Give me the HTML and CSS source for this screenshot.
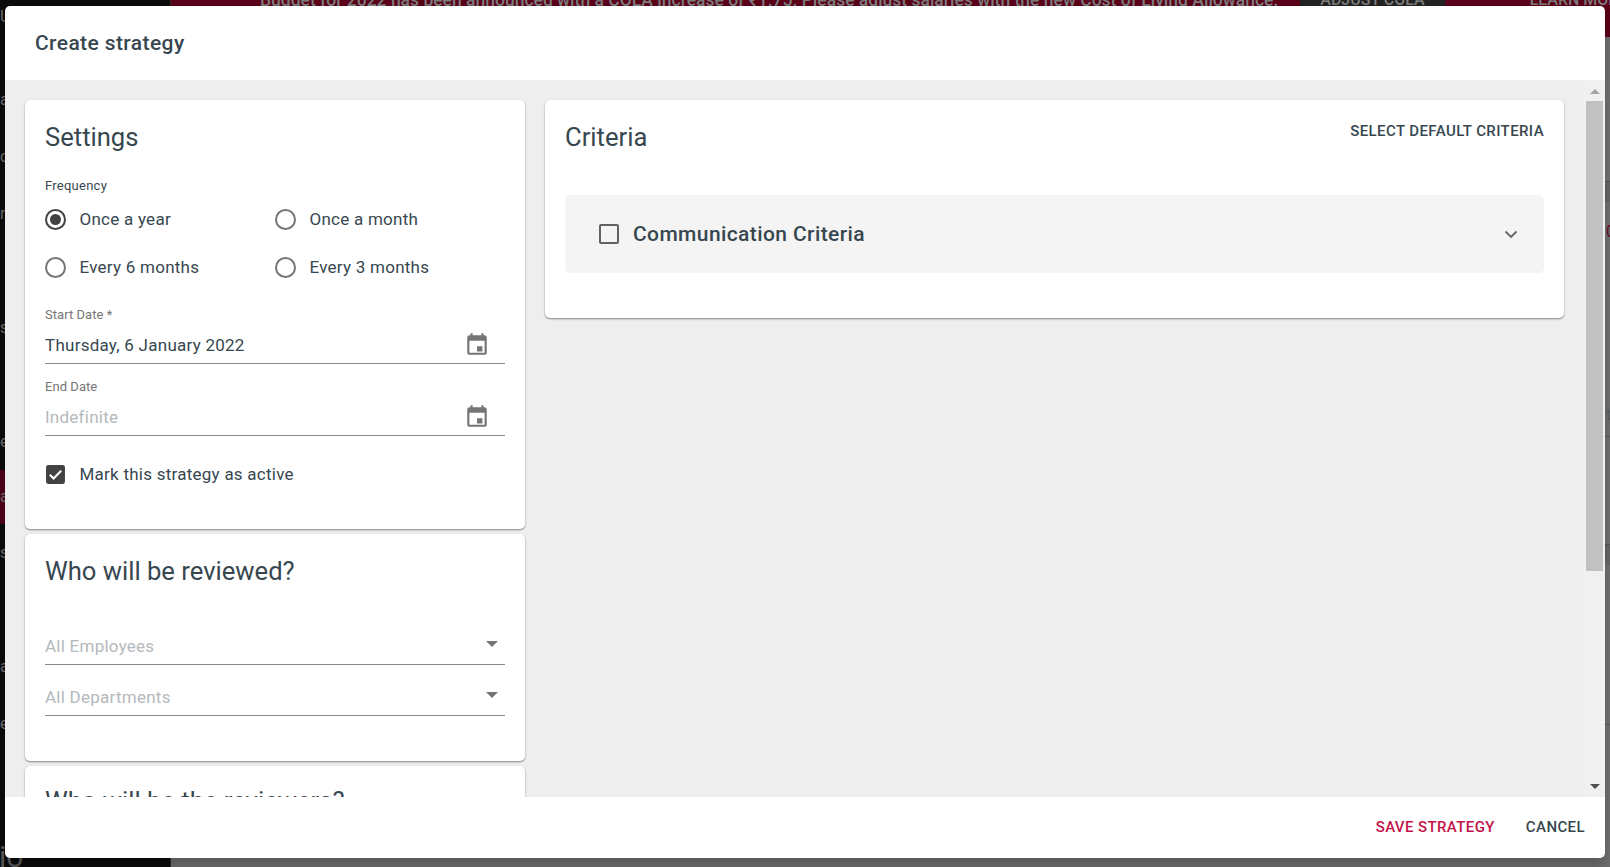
FILE: index.html
```html
<!DOCTYPE html>
<html lang="en">
<head>
<meta charset="utf-8">
<title>Create strategy</title>
<link rel="stylesheet" href="styles.css">
</head>
<body>
<div class="app">
  <nav class="side">
    <ul class="side-list">
      <li class="side-item side-first">U</li>
      <li class="side-item">a</li>
      <li class="side-item">c</li>
      <li class="side-item">r</li>
      <li class="side-item"></li>
      <li class="side-item">st</li>
      <li class="side-item"></li>
      <li class="side-item">e</li>
      <li class="side-item side-active">a</li>
      <li class="side-item">s</li>
      <li class="side-item"></li>
      <li class="side-item">a</li>
      <li class="side-item">e</li>
    </ul>
    <div class="side-logo">io</div>
  </nav>
  <main class="page">
    <div class="banner">
      <span class="banner-text">Budget for 2022 has been announced with a COLA increase of ₹1.75. Please adjust salaries with the new Cost of Living Allowance.</span>
      <span class="banner-btn">ADJUST COLA</span>
      <span class="banner-link">LEARN MORE</span>
    </div>
    <div class="bg-rows">
      <div class="bg-row bg-r1"></div>
      <div class="bg-row bg-band"></div>
      <div class="bg-row bg-r3">0</div>
      <div class="bg-row bg-r4">t<br>p</div>
      <div class="bg-row bg-r5"></div>
      <div class="bg-row bg-band"></div>
      <div class="bg-row bg-r7"></div>
    </div>
  </main>
</div>

<div class="dialog">
  <header class="dialog-head">Create strategy</header>
  <div class="dialog-body">
    <div class="scroll-content">
      <div class="col-left">
        <section class="card card-settings">
          <h2 class="card-title">Settings</h2>
          <div class="small-label freq-label">Frequency</div>
          <div class="radio-grid">
            <label class="radio-row"><span class="radio radio-on"></span>Once a year</label>
            <label class="radio-row"><span class="radio"></span>Once a month</label>
            <label class="radio-row"><span class="radio"></span>Every 6 months</label>
            <label class="radio-row"><span class="radio"></span>Every 3 months</label>
          </div>
          <div class="field field-start">
            <div class="small-label muted">Start Date *</div>
            <div class="input-line">
              <span class="value">Thursday, 6 January 2022</span>
              <svg class="cal" viewBox="0 0 24 24"><path d="M19 4h-1V2h-2v2H8V2H6v2H5c-1.1 0-2 .9-2 2v14c0 1.1.9 2 2 2h14c1.1 0 2-.9 2-2V6c0-1.100-.9-2-2-2zm0 16H5V9h14v11zM12 14h5v5h-5z" fill-rule="evenodd"/></svg>
            </div>
          </div>
          <div class="field field-end">
            <div class="small-label muted">End Date</div>
            <div class="input-line">
              <span class="placeholder">Indefinite</span>
              <svg class="cal" viewBox="0 0 24 24"><path d="M19 4h-1V2h-2v2H8V2H6v2H5c-1.1 0-2 .9-2 2v14c0 1.1.9 2 2 2h14c1.1 0 2-.9 2-2V6c0-1.100-.9-2-2-2zm0 16H5V9h14v11zM12 14h5v5h-5z" fill-rule="evenodd"/></svg>
            </div>
          </div>
          <label class="check-row">
            <svg class="check" viewBox="0 0 20 20"><rect x="1" y="1" width="18" height="18" rx="2" fill="#424242"/><path d="M4.600 10.200l3.600 3.600 7.200-7.400" fill="none" stroke="#fff" stroke-width="2"/></svg>
            Mark this strategy as active
          </label>
        </section>
        <section class="card card-who">
          <h2 class="card-title">Who will be reviewed?</h2>
          <div class="select-line select-first"><span class="placeholder">All Employees</span><span class="caret"></span></div>
          <div class="select-line select-second"><span class="placeholder">All Departments</span><span class="caret"></span></div>
        </section>
        <section class="card card-when">
          <h2 class="card-title">Who will be the reviewers?</h2>
        </section>
      </div>
      <section class="card card-criteria">
        <div class="criteria-head">
          <h2 class="card-title">Criteria</h2>
          <span class="text-btn">SELECT DEFAULT CRITERIA</span>
        </div>
        <div class="panel">
          <span class="box"></span>
          <span class="panel-title">Communication Criteria</span>
          <svg class="chev" viewBox="0 0 14 9"><path d="M1.500 1.500L7 7l5.500-5.500" fill="none" stroke="#666" stroke-width="1.900"/></svg>
        </div>
      </section>
    </div>
    <div class="scrollbar">
      <span class="arrow-up"></span>
      <span class="thumb"></span>
      <span class="arrow-down"></span>
    </div>
  </div>
  <footer class="dialog-foot">
    <span class="foot-btn foot-save">SAVE STRATEGY</span>
    <span class="foot-btn">CANCEL</span>
  </footer>
</div>
</body>
</html>
```

FILE: styles.css
```css
* { box-sizing: border-box; }
html, body { margin: 0; height: 100%; overflow: hidden; }
body { font-family: Roboto, "Liberation Sans", sans-serif; color: #37474f; background: #6e6e6e; }

.app { display: flex; height: 867px; }
.side { width: 171px; background: #0b0b0b; color: #6d6d6d; overflow: hidden; border-right: 1px solid #2a2a2a; flex: none; position: relative; }
.side-list { list-style: none; margin: 0; padding: 0; }
.side-item { height: 57px; font-size: 16px; line-height: 57px; }
.side-first { height: 71px; line-height: 34px; }
.side-active { height: 54px; line-height: 54px; background: #4e0018; }
.side-logo { position: absolute; left: -1px; bottom: -8px; font-size: 30px; line-height: 36px; color: #5a5a5a; }

.page { flex: 1; display: flex; flex-direction: column; min-width: 0; }
.banner { height: 37px; flex: none; background: #5a0018; color: #7b7b7b; font-size: 17.500px; font-weight: 500; display: flex; align-items: flex-start; overflow: hidden; line-height: 12px; padding-left: 89px; }
.banner-text { white-space: nowrap; position: relative; top: -6px; }
.banner-btn { background: #222; padding: 0 20px; margin-left: 22px; height: 37px; font-size: 16px; white-space: nowrap; flex: none; }
.banner-btn, .banner-link { line-height: 0; }
.banner-link { margin-left: 85px; white-space: nowrap; font-size: 16px; }

.bg-rows { flex: 1; display: flex; flex-direction: column; padding-left: 0; background: #6e6e6e; color: #5d5d5d; font-size: 16px; }
.bg-row { flex: none; padding-left: 1435px; border-bottom: 1px solid #555; overflow: hidden; }
.bg-r1 { height: 145px; }
.bg-band { height: 20px; background: #646464; border-bottom: 0; }
.bg-r3 { height: 60px; line-height: 60px; color: #6a0a2a; border-bottom: 0; }
.bg-r4 { height: 175px; padding-top: 132px; line-height: 42px; }
.bg-r5 { height: 108px; }
.bg-r7 { height: 160px; }

.dialog { position: absolute; left: 5px; top: 6px; width: 1600px; height: 852px; background: #fff; border-radius: 5px; overflow: hidden; display: flex; flex-direction: column; box-shadow: 0 10px 12px rgba(0,0,0,.18); }
.dialog-head { height: 74px; flex: none; padding-left: 30px; font-size: 21px; font-weight: 500; letter-spacing: .4px; line-height: 74px; color: #37474f; }
.dialog-body { height: 717px; flex: none; display: flex; background: #eee; overflow: hidden; }
.dialog-foot { flex: 1; display: flex; justify-content: flex-end; align-items: center; gap: 31px; padding: 0 20px 2px 0; }

.scroll-content { flex: 1; min-width: 0; display: flex; align-items: flex-start; gap: 20px; padding: 20px; }
.col-left { width: 500px; flex: none; display: flex; flex-direction: column; gap: 5px; }
.card { background: #fff; border-radius: 5px; padding: 20px; box-shadow: 0 1px 2px rgba(0,0,0,.45); }
.card-title { margin: 0; font-size: 25.600px; font-weight: 400; line-height: 34px; color: #37474f; }

.small-label { font-size: 13px; line-height: 14px; letter-spacing: .05px; color: #37474f; }
.muted { color: #757575; }
.freq-label { margin-top: 25px; letter-spacing: .25px; }
.radio-grid { display: grid; grid-template-columns: 230px 1fr; row-gap: 8px; margin-top: 6px; }
.radio-row { display: flex; align-items: center; height: 40px; font-size: 17px; letter-spacing: .25px; gap: 13.500px; color: #37474f; }
.radio { width: 21px; height: 21px; border-radius: 50%; border: 2px solid #757575; flex: none; position: relative; }
.radio-on { border-color: #424242; }
.radio-on::after { content: ""; position: absolute; left: 3px; top: 3px; width: 11px; height: 11px; border-radius: 50%; background: #424242; }

.field { display: block; }
.field-start { margin-top: 21px; }
.field-end { margin-top: 16px; }
.input-line { display: flex; align-items: center; justify-content: space-between; height: 38px; margin-top: 4px; border-bottom: 1.500px solid #8a8a8a; font-size: 17px; letter-spacing: .25px; padding-right: 15px; padding-top: 1px; }
.value { color: #37474f; }
.placeholder { color: #b4b9bc; font-size: 17px; letter-spacing: .25px; }
.cal { width: 26px; height: 26px; fill: #757575; margin-bottom: 2px; }

.check-row { display: flex; align-items: center; gap: 13.500px; height: 40px; margin-top: 18px; font-size: 17px; letter-spacing: .25px; color: #37474f; }
.check { width: 21px; height: 21px; flex: none; }
.card-settings { height: 429px; }
.card-who { height: 227px; }
.card-when { height: 120px; padding-top: 18px; }

.select-line { display: flex; align-items: center; justify-content: space-between; border-bottom: 1.500px solid #8a8a8a; height: 36px; padding: 0 7px 2px 0; }
.select-first { margin-top: 41px; }
.select-second { margin-top: 15px; }
.caret { width: 0; height: 0; border-left: 6px solid transparent; border-right: 6px solid transparent; border-top: 6px solid #757575; margin-bottom: 4px; }

.card-criteria { flex: 1; min-width: 0; height: 218px; }
.criteria-head { display: flex; justify-content: space-between; align-items: flex-start; }
.text-btn { font-size: 15px; font-weight: 500; letter-spacing: .4px; line-height: 20px; color: #37474f; padding-top: 1px; }
.panel { display: flex; align-items: center; height: 78px; margin-top: 41px; background: #f4f4f4; border-radius: 5px; padding: 0 26px 0 34px; }
.box { width: 20px; height: 20px; border: 2px solid #616161; border-radius: 2px; flex: none; }
.panel-title { margin-left: 14px; font-size: 21px; font-weight: 500; letter-spacing: .4px; color: #37474f; flex: 1; }
.chev { width: 14px; height: 9px; }

.scrollbar { width: 21px; flex: none; background: #f0f0f0; display: flex; flex-direction: column; align-items: center; padding-top: 9px; }
.arrow-up { width: 0; height: 0; border-left: 5px solid transparent; border-right: 5px solid transparent; border-bottom: 5px solid #a3a3a3; flex: none; }
.thumb { width: 17px; height: 470px; background: #c1c1c1; margin-top: 7px; flex: none; }
.arrow-down { width: 0; height: 0; border-left: 5px solid transparent; border-right: 5px solid transparent; border-top: 5px solid #505050; margin-top: 213px; flex: none; }

.foot-btn { font-size: 15px; font-weight: 500; letter-spacing: .4px; color: #37474f; }
.foot-save { color: #c2134a; }
```
